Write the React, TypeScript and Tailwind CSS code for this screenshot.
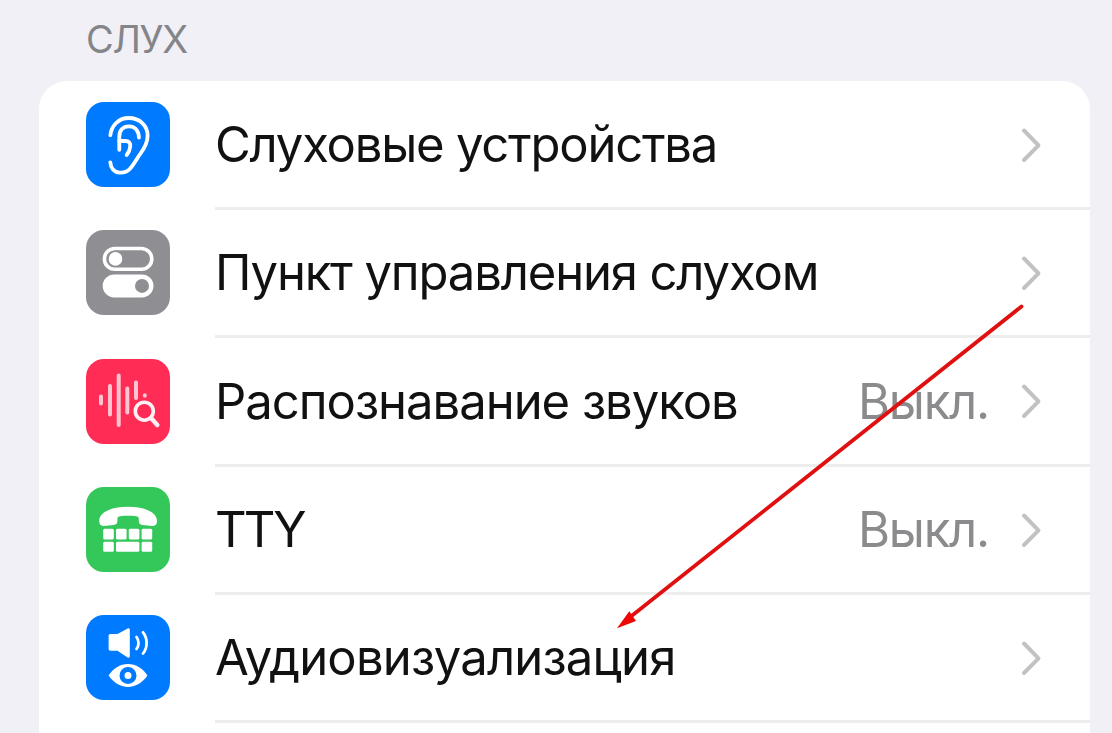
import type { ReactNode } from 'react';

interface SettingsItem {
  title: string;
  titleClass: string;
  value?: string;
  color: string;
  icon: ReactNode;
}

function EarIcon() {
  return (
    <svg viewBox="1 0 84 84" className="w-full h-full" fill="none" stroke="white" strokeWidth="3.8" strokeLinecap="round" strokeLinejoin="round">
      <path d="M25.3 32.7C26.5 22.5 34 15.5 43.7 15.5C54.8 15.5 62.6 23 62.6 33.2C62.6 40 59.5 45.5 55.5 51C51.5 56.5 49 62 45 66.3C42.2 69.3 38.5 70.4 34.6 70.2C29 69.8 25.8 65.5 25.3 60" />
      <path d="M54 35C53.5 27.5 49.5 23.8 44 23.8C38 23.8 34.3 27.8 34.3 34.5V47.3" />
      <path d="M34.3 38.5H40.5C44 38.5 45.6 40.8 45.2 44C44.9 47.3 43.6 50.2 41.7 52.5" />
    </svg>
  );
}

function TogglesIcon() {
  return (
    <svg viewBox="1 0 84 84" className="w-full h-full" fill="white">
      <rect x="19.4" y="18" width="47.4" height="20.8" rx="10.4" fill="none" stroke="white" strokeWidth="3.6" />
      <circle cx="30.5" cy="28.4" r="6.8" />
      <rect x="17.7" y="43.9" width="50.8" height="23" rx="11.5" />
      <circle cx="57" cy="55.4" r="7" fill="#8e8e93" />
    </svg>
  );
}

function SoundSearchIcon() {
  return (
    <svg viewBox="1 0 84 84" className="w-full h-full" fill="none" stroke="#ffc4d0" strokeWidth="4" strokeLinecap="round">
      <path d="M16 37v7M25 26.5v28.5M33.7 16v49.5M42.3 29v24M51 23v15.5M59.8 35.8v.4" />
      <circle cx="59.3" cy="51.7" r="12.5" fill="#ff2d55" stroke="none" />
      <circle cx="59.3" cy="51.7" r="9" stroke="#fff0f3" strokeWidth="3.6" />
      <path d="M66 58.5l6.3 7" stroke="#fff0f3" strokeWidth="4.4" />
    </svg>
  );
}

function TtyIcon() {
  return (
    <svg viewBox="1 0 84 84" className="w-full h-full" fill="white">
      <path d="M14.2 33.5C14.2 24 27.5 19.3 43 19.3S72 24 72 33.5C72 37 70.3 38.6 67.3 38.4L57.6 37.4C54.9 37.1 53.8 35.7 53.8 33.5V31.5C53.8 30 52.8 29 51.2 28.8C46 28.2 40 28.2 35 28.8C33.4 29 32.4 30 32.4 31.5V33.5C32.4 35.7 31.3 37.1 28.6 37.4L18.9 38.4C15.9 38.6 14.2 37 14.2 33.5Z" />
      <rect x="18.2" y="41.2" width="10.6" height="10.8" rx="1.5" />
      <rect x="31" y="41.2" width="10.6" height="10.8" rx="1.5" />
      <rect x="43.8" y="41.2" width="10.6" height="10.8" rx="1.5" />
      <rect x="56.6" y="41.2" width="10.6" height="10.8" rx="1.5" />
      <rect x="18.2" y="54.3" width="10.6" height="10" rx="1.5" />
      <rect x="31" y="54.3" width="23.4" height="10" rx="1.5" />
      <rect x="56.6" y="54.3" width="10.6" height="10" rx="1.5" />
    </svg>
  );
}

function AudioVisualIcon() {
  return (
    <svg viewBox="1 0 84 84" className="w-full h-full" fill="white">
      <path d="M25.5 18.4H32.5L42.2 13.2C43.7 12.4 44.8 13 44.8 14.6V40.4C44.8 42 43.7 42.6 42.2 41.8L32.5 35.2H25.5C24.3 35.2 23.6 34.5 23.6 33.3V20.3C23.6 19.1 24.3 18.4 25.5 18.4Z" />
      <g fill="none" stroke="white" strokeWidth="2.8" strokeLinecap="round">
        <path d="M51.5 21.5C54.2 25 54.2 30 51.5 33.5" />
        <path d="M58 16.8C62.8 22.8 62.8 32 58 38" />
      </g>
      <path d="M23.6 60C28 53.3 35 48.6 43 48.6S58 53.3 62.4 60C58 66.7 51 71.4 43 71.4S28 66.7 23.6 60Z" />
      <circle cx="43" cy="60" r="6" fill="white" stroke="#007aff" strokeWidth="5" />
    </svg>
  );
}

function Chevron() {
  return (
    <svg viewBox="0 0 24 40" className="w-6 h-10 shrink-0" fill="none" stroke="#c2c2c4" strokeWidth="4" strokeLinecap="round" strokeLinejoin="round">
      <path d="M4 5.5L18.5 20.3L4 35" />
    </svg>
  );
}

const items: SettingsItem[] = [
  { title: 'Слуховые устройства', titleClass: 'tracking-[-1.22px]', color: 'bg-[#007aff]', icon: <EarIcon /> },
  { title: 'Пункт управления слухом', titleClass: 'tracking-[-1.15px]', color: 'bg-[#8e8e93]', icon: <TogglesIcon /> },
  { title: 'Распознавание звуков', titleClass: 'tracking-[-1.02px]', value: 'Выкл.', color: 'bg-[#ff2d55]', icon: <SoundSearchIcon /> },
  { title: 'TTY', titleClass: 'tracking-[-3px]', value: 'Выкл.', color: 'bg-[#34c759]', icon: <TtyIcon /> },
  { title: 'Аудиовизуализация', titleClass: 'tracking-[-0.8px]', color: 'bg-[#007aff]', icon: <AudioVisualIcon /> },
];

function SettingsRow({ item }: { item: SettingsItem }) {
  return (
    <li className="flex items-center h-[128.3px] pl-[47px]">
      <div className={`w-[84px] h-[85px] mb-px shrink-0 rounded-[18px] overflow-hidden ${item.color}`}>{item.icon}</div>
      <div className="flex items-center flex-1 h-[130px] ml-[45px] pt-0.5 pr-[46px] border-b-[3px] border-[#ededee]">
        <span className={`flex-1 text-[49px] leading-none text-[#111] whitespace-nowrap ${item.titleClass}`}>
          {item.title}
        </span>
        {item.value && (
          <span className="mr-[31px] text-[49px] leading-none tracking-[-1.2px] text-[#8b8b8e] whitespace-nowrap">
            {item.value}
          </span>
        )}
        <Chevron />
      </div>
    </li>
  );
}

export default function App() {
  return (
    <main className="relative w-[1112px] h-[733px] overflow-hidden bg-[#f0f0f6] font-['Inter','Liberation_Sans',sans-serif]">
      <h2 className="h-[81px] pt-[18px] pl-[86px] text-[38px] leading-[42px] font-normal tracking-[-1.3px] text-[#858589]">
        СЛУХ
      </h2>
      <ul className="h-[700px] ml-[39px] w-[1051px] bg-white rounded-t-[28px]">
        {items.map((item) => (
          <SettingsRow key={item.title} item={item} />
        ))}
      </ul>

      {/* Pointer arrow drawn over the list */}
      <svg viewBox="0 0 1112 733" className="absolute inset-0 w-full h-full pointer-events-none">
        <path d="M1021.5 306.5L629 618" stroke="#e01010" strokeWidth="3.8" strokeLinecap="round" />
        <path d="M617 628.3L629.3 611.3L636 621Z" fill="#f00505" />
      </svg>
    </main>
  );
}
